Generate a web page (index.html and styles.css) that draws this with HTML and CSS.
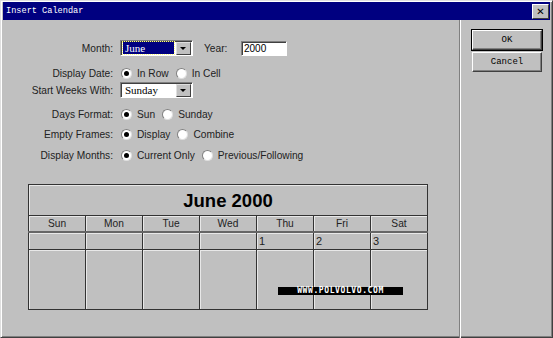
FILE: index.html
```html
<!DOCTYPE html>
<html lang="en">
<head>
    <meta charset="UTF-8">
    <title>Insert Calendar</title>
    <link rel="stylesheet" href="styles.css">
</head>
<body>
<div class="dialog">
    <div class="titlebar">
        <span class="title">Insert Calendar</span>
        <span class="close">&#x2715;</span>
    </div>
    <div class="content">
        <div class="main">
            <div class="row r1">
                <span class="label">Month:</span>
                <span class="select month"><span class="value sel">June</span><span class="arrow"></span></span>
                <span class="year-label">Year:</span>
                <span class="textbox">2000</span>
            </div>
            <div class="row r2">
                <span class="label">Display Date:</span>
                <span class="radio on"></span><span class="opt">In Row</span>
                <span class="radio"></span><span class="opt">In Cell</span>
            </div>
            <div class="row r3">
                <span class="label">Start Weeks With:</span>
                <span class="select month"><span class="value">Sunday</span><span class="arrow"></span></span>
            </div>
            <div class="row r4">
                <span class="label">Days Format:</span>
                <span class="radio on"></span><span class="opt">Sun</span>
                <span class="radio"></span><span class="opt">Sunday</span>
            </div>
            <div class="row r5">
                <span class="label">Empty Frames:</span>
                <span class="radio on"></span><span class="opt">Display</span>
                <span class="radio"></span><span class="opt">Combine</span>
            </div>
            <div class="row r6">
                <span class="label">Display Months:</span>
                <span class="radio on"></span><span class="opt">Current Only</span>
                <span class="radio"></span><span class="opt">Previous/Following</span>
            </div>

            <div class="calendar">
                <table cellspacing="0">
                    <tr class="cal-title">
                        <td colspan="7">June 2000</td>
                    </tr>
                    <tr class="days">
                        <td>Sun</td>
                        <td>Mon</td>
                        <td>Tue</td>
                        <td>Wed</td>
                        <td>Thu</td>
                        <td>Fri</td>
                        <td>Sat</td>
                    </tr>
                    <tr class="dates">
                        <td></td>
                        <td></td>
                        <td></td>
                        <td></td>
                        <td>1</td>
                        <td>2</td>
                        <td>3</td>
                    </tr>
                    <tr class="week">
                        <td></td>
                        <td></td>
                        <td></td>
                        <td></td>
                        <td></td>
                        <td></td>
                        <td></td>
                    </tr>
                </table>
                <div class="watermark">WWW.POLVOLVO.COM</div>
            </div>
        </div>
        <div class="buttons">
            <button class="btn default">OK</button>
            <button class="btn">Cancel</button>
        </div>
    </div>
</div>
</body>
</html>
```

FILE: styles.css
```css
body {
    margin: 0;
    background: #c0c0c0;
}

.dialog {
    width: 553px;
    height: 338px;
    box-sizing: border-box;
    background: #c0c0c0;
    border-left: 1px solid #dfdfdf;
    border-top: 1px solid #dfdfdf;
    border-right: 1px solid #404040;
    border-bottom: 1px solid #404040;
    box-shadow: inset 1px 1px 0 #fff, inset -1px -1px 0 #808080;
    font-family: "Liberation Sans", Arial, sans-serif;
    font-size: 10.2px;
    color: #000;
}

.titlebar {
    height: 18px;
    margin: 1px 2px 0 2px;
    background: #000080;
    display: flex;
    align-items: center;
    justify-content: space-between;
    padding: 0 1px 0 3px;
}

.title {
    color: #fff;
    font-family: "Liberation Mono", "Courier New", monospace;
    font-size: 8.6px;
}

.close {
    width: 15px;
    height: 13px;
    background: #c0c0c0;
    border-left: 1px solid #fff;
    border-top: 1px solid #fff;
    border-right: 1px solid #404040;
    border-bottom: 1px solid #404040;
    font-size: 10px;
    font-weight: bold;
    line-height: 13px;
    text-align: center;
    font-family: "DejaVu Sans", sans-serif;
}

.content {
    display: flex;
}

.main {
    width: 458px;
    height: 300px;
    padding-top: 20px;
    border-right: 1px solid #808080;
    box-shadow: 1px 0 0 #fff;
}

.row {
    display: flex;
    align-items: center;
    height: 16px;
}

.r1 { margin-top: 0; }
.r2 { margin-top: 9px; }
.r3 { margin-top: 1px; }
.r4 { margin-top: 8px; }
.r5 { margin-top: 4px; }
.r6 { margin-top: 5px; }

.label {
    width: 112px;
    text-align: right;
    margin-right: 7px;
    color: #222;
}

.select {
    display: flex;
    align-items: center;
    height: 16px;
    box-sizing: border-box;
    background: #fff;
    border-left: 1px solid #808080;
    border-top: 1px solid #808080;
    border-right: 1px solid #fff;
    border-bottom: 1px solid #fff;
    box-shadow: inset 1px 1px 0 #404040;
    padding: 1px;
}

.month {
    width: 73px;
}

.value {
    flex: 1;
    height: 12px;
    line-height: 12px;
    padding-left: 2px;
    font-family: "Liberation Serif", "Times New Roman", serif;
    font-size: 11px;
    margin-left: 1px;
}

.value.sel {
    background: #000080;
    color: #fff;
    outline: 1px dotted #ffff80;
    margin-right: 2px;
}

.arrow {
    width: 15px;
    height: 13px;
    box-sizing: border-box;
    background: #c0c0c0;
    border-left: 1px solid #dfdfdf;
    border-top: 1px solid #dfdfdf;
    border-right: 1px solid #404040;
    border-bottom: 1px solid #404040;
    position: relative;
}

.arrow::after {
    content: "";
    position: absolute;
    left: 3px;
    top: 4px;
    border-left: 3px solid transparent;
    border-right: 3px solid transparent;
    border-top: 3px solid #000;
}

.year-label {
    margin-left: 11px;
    width: 37px;
    color: #222;
}

.textbox {
    width: 46px;
    height: 15px;
    box-sizing: border-box;
    background: #fff;
    border-left: 1px solid #808080;
    border-top: 1px solid #808080;
    border-right: 1px solid #fff;
    border-bottom: 1px solid #fff;
    box-shadow: inset 1px 1px 0 #404040;
    padding-left: 2px;
    line-height: 13px;
    font-size: 10px;
}

.radio {
    width: 11px;
    height: 11px;
    box-sizing: border-box;
    border-radius: 50%;
    background: #fff;
    border: 1px solid;
    border-color: #808080 #dfdfdf #dfdfdf #808080;
    margin-left: 1px;
    margin-right: 5px;
    position: relative;
}

.radio.on::after {
    content: "";
    position: absolute;
    left: 2px;
    top: 2px;
    width: 5px;
    height: 5px;
    border-radius: 50%;
    background: #000;
}

.opt {
    margin-right: 6px;
    color: #222;
}

.calendar {
    position: relative;
    margin: 21px 0 0 27px;
    width: 400px;
}

.calendar table {
    width: 400px;
    border-collapse: collapse;
    table-layout: fixed;
}

.calendar td {
    border: 1px solid #333;
    padding: 0 2px;
    box-shadow: inset 1px 1px 0 #e8e8e8;
    color: #222;
}

.cal-title td {
    height: 29px;
    text-align: center;
    font-size: 18.5px;
    font-weight: bold;
    color: #000;
    padding-top: 1px;
}

.days td {
    height: 15px;
    text-align: center;
    border-bottom: 2px solid #666;
}

.dates td {
    height: 16px;
    font-size: 11px;
}

.week td {
    height: 59px;
}

.watermark {
    position: absolute;
    left: 250px;
    top: 103px;
    width: 125px;
    height: 8px;
    background: #000;
    color: #fff;
    font-family: "DejaVu Sans Mono", monospace;
    font-size: 8px;
    letter-spacing: 0.6px;
    line-height: 8px;
    text-align: center;
    font-weight: bold;
}

.buttons {
    display: flex;
    flex-direction: column;
    gap: 2px;
    padding: 10px 0 0 12px;
}

.btn {
    width: 70px;
    height: 20px;
    box-sizing: border-box;
    background: #c0c0c0;
    border-left: 1px solid #fff;
    border-top: 1px solid #fff;
    border-right: 1px solid #404040;
    border-bottom: 1px solid #404040;
    box-shadow: inset -1px -1px 0 #808080;
    font-family: "Liberation Mono", "Courier New", monospace;
    font-size: 9px;
    padding: 0;
    color: #000;
}

.btn.default {
    outline: 1px solid #000;
    border-color: #fff #404040 #404040 #fff;
}
```
